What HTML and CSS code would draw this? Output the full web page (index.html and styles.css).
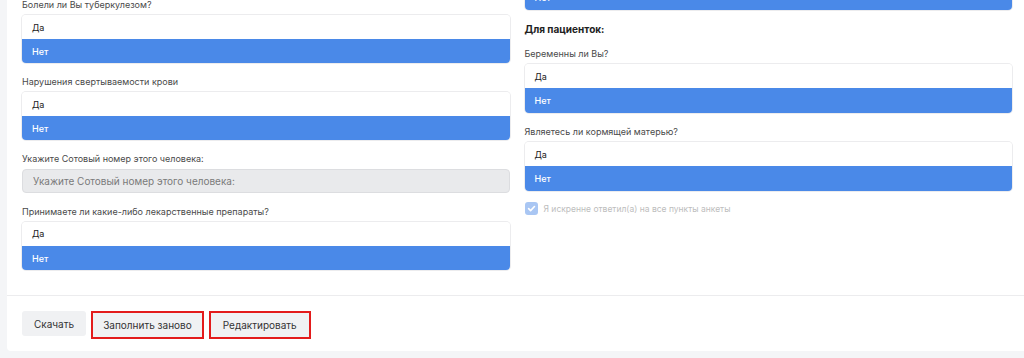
FILE: index.html
```html
<!DOCTYPE html>
<html lang="ru">
<head>
<meta charset="utf-8">
<link rel="stylesheet" href="styles.css">
</head>
<body>
<div class="page">
  <div class="card">
    <div class="card-body">
      <div class="col">
        <div class="label">Болели ли Вы туберкулезом?</div>
        <div class="list">
          <div class="item">Да</div>
          <div class="item active">Нет</div>
        </div>
        <div class="label">Нарушения свертываемости крови</div>
        <div class="list">
          <div class="item">Да</div>
          <div class="item active">Нет</div>
        </div>
        <div class="label">Укажите Сотовый номер этого человека:</div>
        <input class="input" type="text" placeholder="Укажите Сотовый номер этого человека:" disabled>
        <div class="label">Принимаете ли какие-либо лекарственные препараты?</div>
        <div class="list">
          <div class="item">Да</div>
          <div class="item active">Нет</div>
        </div>
      </div>
      <div class="col col-right">
        <div class="list list-cut">
          <div class="item active">Нет</div>
        </div>
        <div class="heading">Для пациенток:</div>
        <div class="label">Беременны ли Вы?</div>
        <div class="list">
          <div class="item">Да</div>
          <div class="item active">Нет</div>
        </div>
        <div class="label">Являетесь ли кормящей матерью?</div>
        <div class="list">
          <div class="item">Да</div>
          <div class="item active">Нет</div>
        </div>
        <label class="check">
          <span class="box"><svg width="9" height="9" viewBox="0 0 10 10"><path d="M1.8 5.2 L4 7.3 L8.3 2.8" fill="none" stroke="#fff" stroke-width="1.8" stroke-linecap="round" stroke-linejoin="round"/></svg></span>
          <span class="check-text">Я искренне ответил(а) на все пункты анкеты</span>
        </label>
      </div>
    </div>
    <div class="card-footer">
      <button class="btn">Скачать</button>
      <button class="btn marked">Заполнить заново</button>
      <button class="btn marked wide">Редактировать</button>
    </div>
  </div>
</div>
</body>
</html>
```

FILE: styles.css
```css
* { box-sizing: border-box; }
html, body {
  margin: 0;
  padding: 0;
  background: #f4f5f7;
  overflow: hidden;
  font-family: Inter, "Noto Sans", sans-serif;
  color: #222;
}
.page {
  padding-left: 7px;
  width: 1040px;
  height: 358px;
}
.card {
  background: #fff;
  width: 1020px;
  border-bottom-left-radius: 4px;
}
.card-body {
  display: flex;
  gap: 15px;
  padding: 0 15px 25px 15px;
  height: 296px;
  border-bottom: 1px solid #ececee;
}
.col {
  flex: 1;
  display: flex;
  flex-direction: column;
  margin-top: -2px;
}
.col-right {
  margin-top: -15px;
}
.label {
  font-size: 9px;
  line-height: 14px;
  color: #4a4a4a;
  margin-bottom: 3px;
  margin-top: 12px;
  white-space: nowrap;
}
.col > .label:first-child { margin-top: 0; }
.list {
  border-radius: 4px;
  overflow: hidden;
  box-shadow: 0 0 0 1px #ececee;
}
.item {
  height: 24px;
  padding-left: 10px;
  display: flex;
  align-items: center;
  font-size: 9px;
  color: #222;
  background: #fff;
}
.item.active {
  height: 25px;
  background: #4a89e8;
  color: #fff;
  font-weight: 500;
}
.input {
  height: 24px;
  width: 100%;
  border: 1px solid #dcdde0;
  border-radius: 4px;
  background: #e9eaec;
  padding: 0 10px;
  font-family: inherit;
  font-size: 10px;
  color: #777;
}
.input::placeholder { color: #7a7a7a; }
.heading {
  margin-top: 12px;
  font-size: 10px;
  line-height: 14px;
  font-weight: 700;
  color: #222;
}
.heading + .label { margin-top: 11px; }
.check {
  margin-top: 11px;
  display: flex;
  align-items: center;
  gap: 6px;
}
.box {
  width: 13px;
  height: 13px;
  border-radius: 3px;
  background: #a9c6f3;
  display: flex;
  align-items: center;
  justify-content: center;
}
.check-text {
  font-size: 8.5px;
  color: #bdbdbd;
}
.card-footer {
  display: flex;
  align-items: flex-start;
  gap: 5px;
  padding: 15px 15px 0 15px;
  height: 55px;
}
.btn {
  font-family: inherit;
  font-size: 10px;
  color: #333;
  background: #f0f1f3;
  border: 0;
  border-radius: 3px;
  height: 25px;
  padding: 0 12px;
}
.btn.marked {
  height: 28px;
  border: 2px solid #e31b1b;
  border-radius: 0;
  padding: 0 10px;
}
.btn.marked.wide {
  padding: 0 12px;
}
```
